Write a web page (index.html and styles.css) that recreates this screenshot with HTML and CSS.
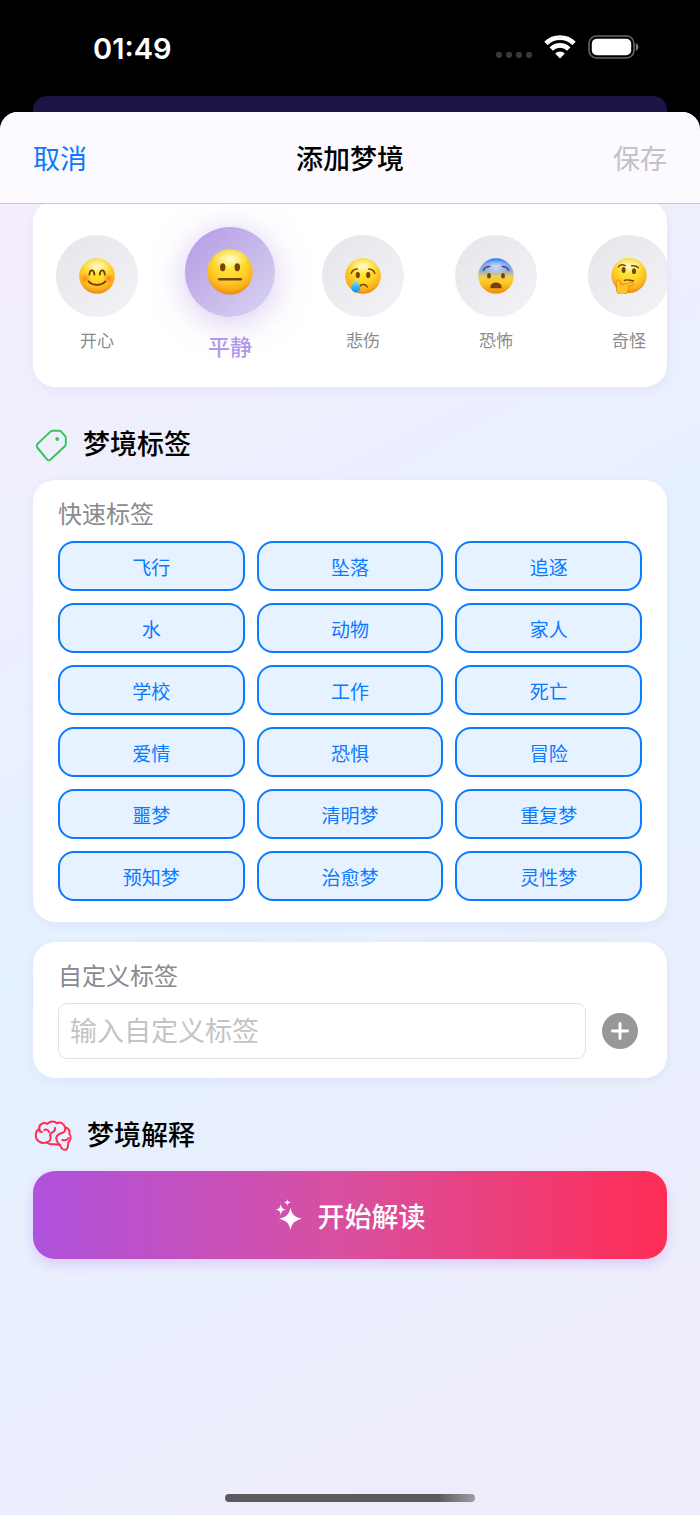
FILE: index.html
```html
<!DOCTYPE html>
<html lang="zh-CN">
<head>
    <meta charset="UTF-8">
    <meta name="viewport" content="width=device-width, initial-scale=1">
    <title>添加梦境</title>
    <link rel="stylesheet" href="styles.css">
</head>
<body>

    <!-- shared gradients for the mood faces -->
    <svg class="defs" width="0" height="0" aria-hidden="true">
        <defs>
            <radialGradient id="face" cx="50%" cy="30%" r="72%">
                <stop offset="0" stop-color="#ffee38"/>
                <stop offset="0.5" stop-color="#fed52a"/>
                <stop offset="0.8" stop-color="#fbb01c"/>
                <stop offset="1" stop-color="#e8820e"/>
            </radialGradient>
            <radialGradient id="shine">
                <stop offset="0" stop-color="#fff" stop-opacity="0.8"/>
                <stop offset="0.5" stop-color="#fff" stop-opacity="0.4"/>
                <stop offset="1" stop-color="#fff" stop-opacity="0"/>
            </radialGradient>
            <radialGradient id="blush">
                <stop offset="0" stop-color="#ff6a1f" stop-opacity="0.75"/>
                <stop offset="1" stop-color="#ff7a1f" stop-opacity="0"/>
            </radialGradient>
            <linearGradient id="fear" x1="0" y1="0" x2="0" y2="1">
                <stop offset="0" stop-color="#1f78f5"/>
                <stop offset="0.16" stop-color="#739df0"/>
                <stop offset="0.36" stop-color="#8fa9d8"/>
                <stop offset="0.5" stop-color="#e9cf5a"/>
                <stop offset="0.65" stop-color="#fdcb28"/>
                <stop offset="1" stop-color="#ee8c10"/>
            </linearGradient>
            <linearGradient id="tear" x1="0" y1="0" x2="0" y2="1">
                <stop offset="0" stop-color="#c4ecff"/>
                <stop offset="0.6" stop-color="#35b8f5"/>
                <stop offset="1" stop-color="#0c8fe6"/>
            </linearGradient>
        </defs>
    </svg>

    <div class="status-bar">
        <span class="time">01:49</span>
        <div class="status-icons">
            <svg width="36" height="8" viewBox="0 0 36 8" fill="#3a3a3a">
                <rect x="0" y="1" width="6" height="6" rx="2.4"/>
                <rect x="10" y="1" width="6" height="6" rx="2.4"/>
                <rect x="20" y="1" width="6" height="6" rx="2.4"/>
                <rect x="30" y="1" width="6" height="6" rx="2.4"/>
            </svg>
            <svg width="32" height="24" viewBox="0 0 32 24" fill="none" stroke="#fff" stroke-width="4.6">
                <path d="M1.900 8.400a20 20 0 0 1 28.200 0"/>
                <path d="M7.200 14a12.600 12.600 0 0 1 17.600 0"/>
                <path d="M11.200 18.400a6.800 6.800 0 0 1 9.600 0L16 23.400z" fill="#fff" stroke="none"/>
            </svg>
            <svg width="51" height="24" viewBox="0 0 51 24">
                <rect x="1" y="1" width="45" height="22" rx="7.5" fill="none" stroke="#656565" stroke-width="1.6"/>
                <rect x="3.800" y="3.800" width="39.400" height="16.400" rx="5" fill="#fff"/>
                <path d="M47.800 8.200c3.600 1.200 3.600 6.400 0 7.600z" fill="#7a7a7a"/>
            </svg>
        </div>
    </div>
    <div class="page-behind"></div>

    <div class="sheet">
        <header class="nav">
            <button type="button" class="nav-btn">取消</button>
            <h1>添加梦境</h1>
            <button type="button" class="nav-btn save" disabled>保存</button>
        </header>

        <main>
            <div class="card moods">
                <button type="button" class="mood">
                    <span class="mood-circle">
                        <svg viewBox="0 0 36 36">
                            <circle cx="18" cy="18" r="17.8" fill="url(#face)"/>
                            <ellipse cx="18" cy="8" rx="14" ry="8" fill="url(#shine)"/>
                            <circle cx="6.500" cy="20.500" r="5.500" fill="url(#blush)"/>
                            <circle cx="29.500" cy="20.500" r="5.500" fill="url(#blush)"/>
                            <g fill="none" stroke="#6b3a06" stroke-width="1.800" stroke-linecap="round">
                                <path d="M10.400 16.600c.5-5.600 4.400-5.600 5 0"/>
                                <path d="M20.800 16.600c.5-5.600 4.400-5.600 5 0"/>
                                <path d="M9.600 23.400c4.400 4.600 12.400 4.600 16.800 0"/>
                            </g>
                        </svg>
                    </span>
                    <span class="mood-name">开心</span>
                </button>
                <button type="button" class="mood selected">
                    <span class="mood-circle">
                        <svg viewBox="0 0 36 36">
                            <circle cx="18" cy="18" r="17.8" fill="url(#face)"/>
                            <ellipse cx="18" cy="8" rx="14" ry="8" fill="url(#shine)"/>
                            <g fill="#75430a">
                                <ellipse cx="12.300" cy="14.300" rx="2.100" ry="3.200"/>
                                <ellipse cx="23.700" cy="14.300" rx="2.100" ry="3.200"/>
                                <rect x="8.600" y="22.600" width="18.800" height="2" rx="1"/>
                            </g>
                        </svg>
                    </span>
                    <span class="mood-name">平静</span>
                </button>
                <button type="button" class="mood">
                    <span class="mood-circle">
                        <svg viewBox="0 0 36 36">
                            <circle cx="18" cy="18" r="17.8" fill="url(#face)"/>
                            <ellipse cx="18" cy="8" rx="14" ry="8" fill="url(#shine)"/>
                            <g fill="#75430a">
                                <ellipse cx="12.800" cy="17" rx="2.100" ry="3.100"/>
                                <ellipse cx="23.200" cy="17" rx="2.100" ry="3.100"/>
                            </g>
                            <g fill="none" stroke="#75430a" stroke-width="1.500" stroke-linecap="round">
                                <path d="M6.200 15.200c1-2.600 3.200-4 6-4.200"/>
                                <path d="M29.800 15.200c-1-2.600-3.200-4-6-4.200"/>
                                <path d="M14.200 29c1.600-3.400 6.400-3.400 8 0"/>
                            </g>
                            <path d="M10.800 20.400c-1.500 4-4.400 6.600-4.400 9.600a4.400 4.400 0 0 0 8.800 0c0-3-2.900-5.600-4.400-9.600z" fill="url(#tear)"/>
                        </svg>
                    </span>
                    <span class="mood-name">悲伤</span>
                </button>
                <button type="button" class="mood">
                    <span class="mood-circle">
                        <svg viewBox="0 0 36 36">
                            <circle cx="18" cy="18" r="17.8" fill="url(#fear)"/>
                            <ellipse cx="18" cy="9" rx="14" ry="8" fill="url(#shine)" opacity="0.8"/>
                            <g fill="#75430a">
                                <ellipse cx="11" cy="17.800" rx="2" ry="2.700"/>
                                <ellipse cx="25" cy="17.800" rx="2" ry="2.700"/>
                                <path d="M12.400 29c0-6 11.200-6 11.200 0 0 2-1.800 1.200-5.600 1.200s-5.600.8-5.600-1.200z"/>
                            </g>
                            <g fill="none" stroke="#3f4570" stroke-width="1.500" stroke-linecap="round">
                                <path d="M5.400 12.200c1.400-2.400 3.600-3.600 6.200-3.600"/>
                                <path d="M30.600 12.200c-1.400-2.400-3.600-3.600-6.200-3.600"/>
                            </g>
                        </svg>
                    </span>
                    <span class="mood-name">恐怖</span>
                </button>
                <button type="button" class="mood">
                    <span class="mood-circle">
                        <svg viewBox="0 0 36 36">
                            <circle cx="18" cy="17.400" r="17.600" fill="url(#face)"/>
                            <ellipse cx="18" cy="7.500" rx="14" ry="8" fill="url(#shine)"/>
                            <g fill="#75430a">
                                <ellipse cx="12.600" cy="12" rx="2" ry="2.900"/>
                                <ellipse cx="23" cy="13.200" rx="2" ry="2.900"/>
                            </g>
                            <g fill="none" stroke="#75430a" stroke-width="1.500" stroke-linecap="round">
                                <path d="M7.400 9c1.200-2.200 4-2.800 6.800-1.400"/>
                                <path d="M20.600 7.800c2.600-.4 5 .2 6.800 2"/>
                                <path d="M13.400 22.400c3-1.600 6.200.6 9 .2"/>
                            </g>
                            <path d="M6.400 22.200c1.400-.8 2.600.2 3 1.600l.8 3c3.400-.4 7-2 10.600-2.400 1.800-.2 2.400 2 .6 2.600l-4.200 1.400c1.400.8 1 2.200 0 2.800.4 3-2 5.200-5.800 5.200-4.600 0-6.200-2.200-6-6.200.2-3-1.200-6.600 1-8z" fill="#fec42c" stroke="#de8414" stroke-width="0.900"/>
                        </svg>
                    </span>
                    <span class="mood-name">奇怪</span>
                </button>
            </div>

            <h2 class="section-title">
                <svg width="35" height="34" viewBox="0 0 35 34" fill="none" stroke="#34c759" stroke-width="2" stroke-linejoin="round">
                    <path d="M4.600 15.800 17.400 3.600Q18.400 2.800 19.600 2.800H26.200q1.200 0 2 .8L32 7.800q.8 1 .8 2.200V15.800q0 1.400-1 2.400L17.600 31.400q-1.800 1.600-3.600 0L4.600 20q-1.600-2.200 0-4.200z"/>
                    <circle cx="24.200" cy="11" r="1.900" fill="#34c759" stroke="none"/>
                </svg>
                梦境标签
            </h2>

            <div class="card quick">
                <h3>快速标签</h3>
                <div class="tags">
                    <button type="button">飞行</button>
                    <button type="button">坠落</button>
                    <button type="button">追逐</button>
                    <button type="button">水</button>
                    <button type="button">动物</button>
                    <button type="button">家人</button>
                    <button type="button">学校</button>
                    <button type="button">工作</button>
                    <button type="button">死亡</button>
                    <button type="button">爱情</button>
                    <button type="button">恐惧</button>
                    <button type="button">冒险</button>
                    <button type="button">噩梦</button>
                    <button type="button">清明梦</button>
                    <button type="button">重复梦</button>
                    <button type="button">预知梦</button>
                    <button type="button">治愈梦</button>
                    <button type="button">灵性梦</button>
                </div>
            </div>

            <form class="card custom">
                <label for="customTag">自定义标签</label>
                <div class="custom-row">
                    <input type="text" id="customTag" placeholder="输入自定义标签">
                    <button type="button" class="add-btn" aria-label="添加">
                        <svg width="36" height="36" viewBox="0 0 36 36">
                            <circle cx="18" cy="18" r="18" fill="#989898"/>
                            <path d="M18 10.500v15M10.500 18h15" stroke="#fff" stroke-width="2.900" stroke-linecap="round"/>
                        </svg>
                    </button>
                </div>
            </form>

            <h2 class="section-title">
                <svg width="39" height="32" viewBox="-4 0 117 96" fill="none" stroke="#ff2d55" stroke-width="6" stroke-linecap="round" stroke-linejoin="round">
                    <path d="M39 12C28 4 12 14 15 27 2 32 0 56 14 64c8 6 18 5 23 3 4 5 14 6 22 6 8 1 14 0 18 2 3 9 10 16 17 14 8-2 7-14 8-22 8-8 9-19 3-26 3-9-3-17-13-19C90 10 76 4 68 10 60 1 45 3 39 12z"/>
                    <path d="M15 27c0 6 3 9 8 9"/>
                    <path d="M30 30c6-3 12 0 14 6M62 24c1 7-2 11-8 13-6 2-7 6-6 10"/>
                    <path d="M37 67c10-2 14-9 11-20"/>
                    <path d="M92 22c2 9-2 15-9 17-14 4-20 12-16 22 1 5 4 9 10 14"/>
                    <path d="M84 60c8 2 14 1 19-6"/>
                </svg>
                梦境解释
            </h2>

            <button type="button" class="start-btn">
                <svg width="28" height="32" viewBox="0 0 28 32" fill="#fff">
                    <path d="M15.500 8.400c1.600 7.200 3.600 9.200 11.500 11.400-7.900 2.200-9.900 4.200-11.500 11.400-1.600-7.200-3.600-9.200-11.500-11.400 7.900-2.200 9.900-4.200 11.500-11.400z"/>
                    <path d="M5.800 5c.7 3.800 1.600 4.800 5.400 5.600-3.800.8-4.700 1.800-5.400 5.600C5.100 12.400 4.200 11.400.4 10.600 4.200 9.800 5.100 8.800 5.800 5z"/>
                    <path d="M12.400 0c.4 2.400 1 3 3.400 3.500-2.400.5-3 1.100-3.400 3.500C12 4.600 11.400 4 9 3.500 11.400 3 12 2.400 12.400 0z"/>
                </svg>
                开始解读
            </button>
        </main>

        <div class="home-indicator"></div>
    </div>

</body>
</html>
```
FILE: styles.css
```css
* {
    box-sizing: border-box;
}

body {
    margin: 0;
    min-height: 100vh;
    display: flex;
    flex-direction: column;
    background: #000;
    color: #000;
    font-family: Inter, "Noto Sans CJK SC", sans-serif;
}

h1, h2, h3 {
    margin: 0;
    font-weight: 500;
}

button, input {
    font-family: inherit;
    margin: 0;
}

button {
    padding: 0;
    border: none;
    background: none;
}

.defs {
    position: absolute;
}

/* status bar */
.status-bar {
    height: 96px;
    padding: 0 61px 0 93px;
    display: flex;
    justify-content: space-between;
    align-items: center;
    color: #fff;
}

.time {
    font-size: 29px;
    font-weight: 600;
}

.status-icons {
    display: flex;
    align-items: center;
    gap: 12px;
    padding-bottom: 2px;
}

.status-icons svg:first-child {
    margin-top: 16px;
}

.page-behind {
    height: 16px;
    margin: 0 33px;
    border-radius: 14px 14px 0 0;
    background: #1e1445;
}

/* sheet */
.sheet {
    flex: 1;
    display: flex;
    flex-direction: column;
    border-radius: 18px 18px 0 0;
    overflow: hidden;
    background: linear-gradient(153deg, #f7edfb 0%, #e4f1ff 50%, #f0ebfa 100%);
}

.nav {
    position: relative;
    z-index: 1;
    height: 92px;
    padding: 0 33px;
    display: grid;
    grid-template-columns: 1fr auto 1fr;
    align-items: center;
    background: #fcfaff;
    border-bottom: 1px solid #cbc9ce;
}

.nav h1 {
    font-size: 27px;
}

.nav-btn {
    justify-self: start;
    color: #0a7aff;
    font-size: 27px;
}

.nav-btn.save {
    justify-self: end;
    color: #c2c1c6;
}

main {
    margin-top: -4px;
    padding: 0 33px;
    display: flex;
    flex-direction: column;
}

.card {
    border-radius: 22px;
    background: #fff;
    box-shadow: 0 3px 12px rgba(80, 60, 160, 0.06);
}

/* moods */
.moods {
    display: flex;
    align-items: flex-start;
    gap: 51px;
    padding: 35px 23px 28px;
    overflow: hidden;
}

.mood {
    flex: none;
    width: 82px;
    display: flex;
    flex-direction: column;
    align-items: center;
    gap: 12px;
    color: #8a8a8e;
    font-size: 17px;
    line-height: 24px;
}

.mood-circle {
    width: 82px;
    height: 82px;
    display: flex;
    align-items: center;
    justify-content: center;
    border-radius: 50%;
    background: linear-gradient(135deg, #e5e5ea, #f2f2f7);
}

.mood-circle svg {
    width: 36px;
    height: 36px;
}

.mood.selected {
    width: 90px;
    margin: -8px -4px 0;
    gap: 18px;
    color: #b398e6;
    font-size: 22px;
    font-weight: 500;
}

.selected .mood-circle {
    width: 90px;
    height: 90px;
    background: linear-gradient(135deg, #b59ae6, #d8d5f0);
    box-shadow: 0 5px 32px rgba(175, 145, 230, 0.5);
}

.selected .mood-circle svg {
    width: 46px;
    height: 46px;
}

/* sections */
.section-title {
    margin: 40px 0 17px;
    display: flex;
    align-items: center;
    gap: 15px;
    font-size: 27px;
    line-height: 36px;
}

.card h3, .card label {
    display: block;
    margin-bottom: 10px;
    color: #8a8a8e;
    font-size: 24px;
    font-weight: 400;
    line-height: 32px;
}

.quick {
    padding: 19px 25px 21px;
}

.tags {
    display: grid;
    grid-template-columns: repeat(3, 1fr);
    gap: 12px;
}

.tags button {
    height: 50px;
    border: 2px solid #0a7aff;
    border-radius: 16px;
    background: #e6f2ff;
    color: #0a7aff;
    font-size: 19px;
}

.custom {
    margin-top: 20px;
    padding: 19px 25px;
}

.custom-row {
    display: flex;
    align-items: center;
    gap: 16px;
    padding-right: 4px;
}

.custom input {
    flex: 1;
    min-width: 0;
    height: 56px;
    padding: 0 11px;
    border: 1px solid #e2e2e3;
    border-radius: 9px;
    background: #fff;
    font-size: 27px;
}

.custom input::placeholder {
    color: #c4c4c6;
}

.add-btn svg {
    display: block;
}

.start-btn {
    height: 88px;
    display: flex;
    align-items: center;
    justify-content: center;
    gap: 15px;
    border-radius: 22px;
    background: linear-gradient(to right, #af52de, #d94f9e 50%, #ff2d55);
    box-shadow: 0 5px 12px rgba(175, 82, 222, 0.22);
    color: #fff;
    font-size: 27px;
    font-weight: 500;
}

.home-indicator {
    width: 250px;
    height: 8px;
    margin: auto auto 13px;
    border-radius: 4px;
    background: linear-gradient(to right, #5a5a5e 85%, #9c9ca2);
}
```
